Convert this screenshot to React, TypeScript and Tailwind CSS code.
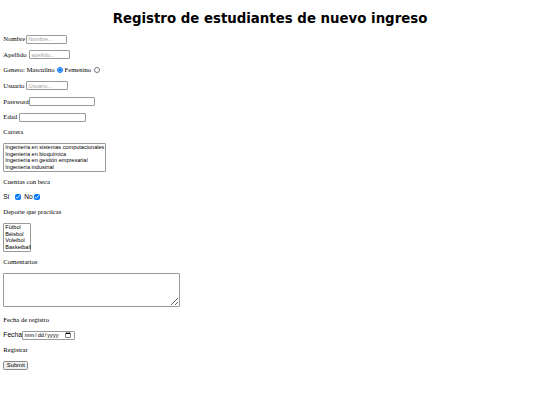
const control =
  "h-[9px] rounded-[1px] border border-[#9a9a9a] bg-white px-[1px] font-['Liberation_Sans',sans-serif] text-[5.55px] text-black outline-none placeholder:text-[#a3a3a3]";

const listbox =
  "rounded-[1px] border border-[#9a9a9a] bg-white px-[1px] py-[0.5px] font-['Liberation_Sans',sans-serif] text-[5.55px] leading-[6.6px] text-black";

const carreras = [
  "Ingeniería en sistemas computacionales",
  "Ingeniería en bioquímica",
  "Ingeniería en gestión empresarial",
  "Ingeniería industrial",
];

const deportes = ["Fútbol", "Béisbol", "Voleibol", "Basketball"];

function TextRow({ children }: { children: React.ReactNode }) {
  return <div className="h-[7.67px] leading-[7.67px]">{children}</div>;
}

function FieldRow({ children }: { children: React.ReactNode }) {
  return <div className="flex h-[9px] items-center whitespace-nowrap">{children}</div>;
}

export default function App() {
  return (
    <div className="min-h-screen bg-white px-[3.33px] font-['Liberation_Serif',serif] text-[6.67px] text-black">
      <h1 className="mt-[11px] mb-[8px] text-center font-['DejaVu_Sans',sans-serif] text-[13.33px] font-bold leading-[15.5px]">
        Registro de estudiantes de nuevo ingreso
      </h1>

      <form className="flex flex-col gap-[6.67px]">
        <FieldRow>
          <span>Nombre</span>
          <input className={`${control} ml-[1px] w-[41px]`} placeholder="Nombre..." />
        </FieldRow>

        <FieldRow>
          <span>Apellido</span>
          <input className={`${control} ml-[2.5px] w-[41px]`} placeholder="apellido..." />
        </FieldRow>

        <FieldRow>
          <span>Genero: Masculino</span>
          <input type="radio" name="genero" defaultChecked className="mr-[1.5px] ml-[2.5px] h-[6px] w-[6px]" />
          <span>Femenino</span>
          <input type="radio" name="genero" className="ml-[2.5px] h-[6px] w-[6px]" />
        </FieldRow>

        <FieldRow>
          <span>Usuario</span>
          <input className={`${control} ml-[2px] w-[42px]`} placeholder="Usuario..." />
        </FieldRow>

        <FieldRow>
          <span>Password</span>
          <input type="password" className={`${control} w-[66px]`} />
        </FieldRow>

        <FieldRow>
          <span>Edad</span>
          <input className={`${control} ml-[2px] w-[67px]`} />
        </FieldRow>

        <TextRow>Carrera</TextRow>

        <div className={`${listbox} h-[29px] w-[103px]`}>
          {carreras.map((c) => (
            <div key={c} className="whitespace-nowrap">
              {c}
            </div>
          ))}
        </div>

        <TextRow>Cuentas con beca</TextRow>

        <FieldRow>
          <span className="font-['Liberation_Sans',sans-serif]">Si</span>
          <input type="checkbox" defaultChecked className="ml-[5.5px] h-[6px] w-[6px]" />
          <span className="ml-[3.5px] font-['Liberation_Sans',sans-serif]">No</span>
          <input type="checkbox" defaultChecked className="ml-[1.5px] h-[6px] w-[6px]" />
        </FieldRow>

        <TextRow>Deporte que practicas</TextRow>

        <div className={`${listbox} h-[29px] w-[28px]`}>
          {deportes.map((d) => (
            <div key={d} className="whitespace-nowrap">
              {d}
            </div>
          ))}
        </div>

        <TextRow>Comentarios</TextRow>

        <div className="h-[37px]">
          <textarea className="h-[34.5px] w-[177px] rounded-[1px] border border-[#9a9a9a] bg-white outline-none" />
        </div>

        <TextRow>Fecha de registro</TextRow>

        <FieldRow>
          <span className="font-['Liberation_Sans',sans-serif]">Fecha</span>
          <input type="date" className={`${control} h-[8.5px] w-[53px] text-[#999]`} />
        </FieldRow>

        <TextRow>Registrar</TextRow>

        <div className="flex h-[10px] items-center">
          <button
            type="button"
            className="h-[8.5px] w-[25px] rounded-[1.5px] border border-[#8a8a8a] bg-[#efefef] font-['Liberation_Sans',sans-serif] text-[5.8px] leading-none"
          >
            Submit
          </button>
        </div>
      </form>
    </div>
  );
}
